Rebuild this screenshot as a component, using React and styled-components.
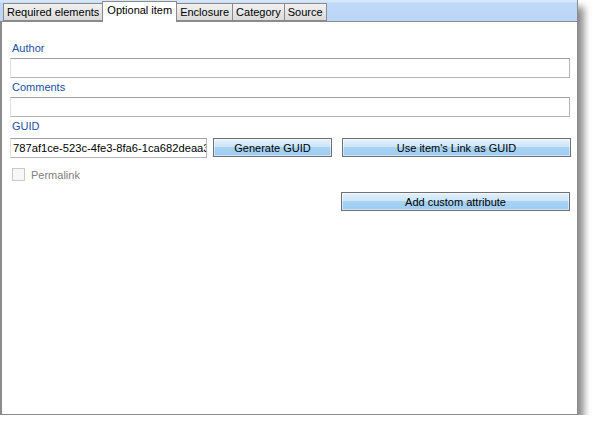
import React from "react";
import styled, { createGlobalStyle } from "styled-components";

const Global = createGlobalStyle`
  html, body { margin: 0; padding: 0; background: #ffffff; }
  body { font-family: "Liberation Sans", Arial, sans-serif; font-size: 11px; }
`;

const Window = styled.div`
  width: 578px;
  height: 415px;
  display: flex;
  flex-direction: column;
  background: #ffffff;
  box-shadow: 6px 7px 7px rgba(0, 0, 0, 0.45);
`;

const TabStrip = styled.div`
  height: 21px;
  flex: none;
  display: flex;
  align-items: flex-end;
  padding-left: 3px;
  background: linear-gradient(#d6e6f9 0, #d6e6f9 2px, #bfd8f8 3px, #bcd6f8 100%);
  border-bottom: 1px solid #8b8b8b;
  border-right: 1px solid #8b8b8b;
  box-sizing: content-box;
`;

const Tab = styled.div`
  height: ${(p) => (p.$active ? "21px" : "18px")};
  box-sizing: border-box;
  padding: ${(p) => (p.$active ? "2px 4px 0 4px" : "0 3px")};
  margin-bottom: ${(p) => (p.$active ? "-1px" : "0")};
  display: flex;
  align-items: ${(p) => (p.$active ? "flex-start" : "center")};
  font-size: 11px;
  color: #000;
  background: ${(p) =>
    p.$active ? "#ffffff" : "linear-gradient(#f2f2f2, #e6e6e6 50%, #dadada)"};
  border: 1px solid #8b8b8b;
  border-bottom: ${(p) => (p.$active ? "none" : "1px solid #8b8b8b")};
  margin-left: ${(p) => (p.$first ? "0" : "-1px")};
  position: relative;
  z-index: ${(p) => (p.$active ? 1 : 0)};
  white-space: nowrap;
`;

const Panel = styled.div`
  flex: 1;
  border: 1px solid #8b8b8b;
  border-top: none;
  border-left: 2px solid #8b8b8b;
  padding: 17px 7px 0 8px;
  display: flex;
  flex-direction: column;
`;

const Label = styled.div`
  color: #1a4fa5;
  font-size: 11px;
  height: ${(p) => p.$h || "19px"};
  padding-left: 2px;
  line-height: 18px;
`;

const Field = styled.div`
  height: 20px;
  box-sizing: border-box;
  border: 1px solid #b5b5b5;
  border-top-color: #a0a0a0;
  border-left-color: #e0e0e0;
  background: #fff;
  width: ${(p) => p.$w || "auto"};
  flex: none;
  padding: 0 2px;
  display: flex;
  align-items: center;
  overflow: hidden;
  white-space: nowrap;
  font-size: 11.2px;
  color: #000;
`;

const Row = styled.div`
  display: flex;
  align-items: flex-start;
`;

const Button = styled.div`
  height: 19px;
  box-sizing: border-box;
  width: ${(p) => p.$w};
  flex: none;
  margin-left: ${(p) => p.$ml || "0"};
  border: 1px solid #707070;
  background: linear-gradient(#e4f1fc 0%, #cde5f9 45%, #a9d3f3 50%, #9ccbf0 100%);
  display: flex;
  align-items: center;
  justify-content: center;
  font-size: 11px;
  color: #000;
  box-shadow: inset 0 0 0 1px rgba(255, 255, 255, 0.5);
`;

const CheckRow = styled.div`
  display: flex;
  align-items: center;
  margin-top: 10px;
  padding-left: 2px;
  height: 13px;
`;

const Box = styled.div`
  width: 13px;
  height: 13px;
  box-sizing: border-box;
  border: 1px solid #c9c9c9;
  background: #f7f7f7;
`;

const CheckText = styled.span`
  margin-left: 6px;
  color: #808080;
  font-size: 11px;
`;

const RightRow = styled.div`
  display: flex;
  justify-content: flex-end;
  margin-top: 11px;
`;

const tabs = ["Required elements", "Optional item", "Enclosure", "Category", "Source"];

export default function App() {
  return (
    <>
      <Global />
      <Window>
        <TabStrip>
          {tabs.map((t, i) => (
            <Tab key={t} $first={i === 0} $active={i === 1}>
              {t}
            </Tab>
          ))}
        </TabStrip>
        <Panel>
          <Label>Author</Label>
          <Field />
          <Label>Comments</Label>
          <Field />
          <Label $h="21px">GUID</Label>
          <Row>
            <Field $w="197px">787af1ce-523c-4fe3-8fa6-1ca682deaa34</Field>
            <Button $w="119px" $ml="6px">Generate GUID</Button>
            <Button $w="229px" $ml="10px">Use item's Link as GUID</Button>
          </Row>
          <CheckRow>
            <Box />
            <CheckText>Permalink</CheckText>
          </CheckRow>
          <RightRow>
            <Button $w="229px">Add custom attribute</Button>
          </RightRow>
        </Panel>
      </Window>
    </>
  );
}
